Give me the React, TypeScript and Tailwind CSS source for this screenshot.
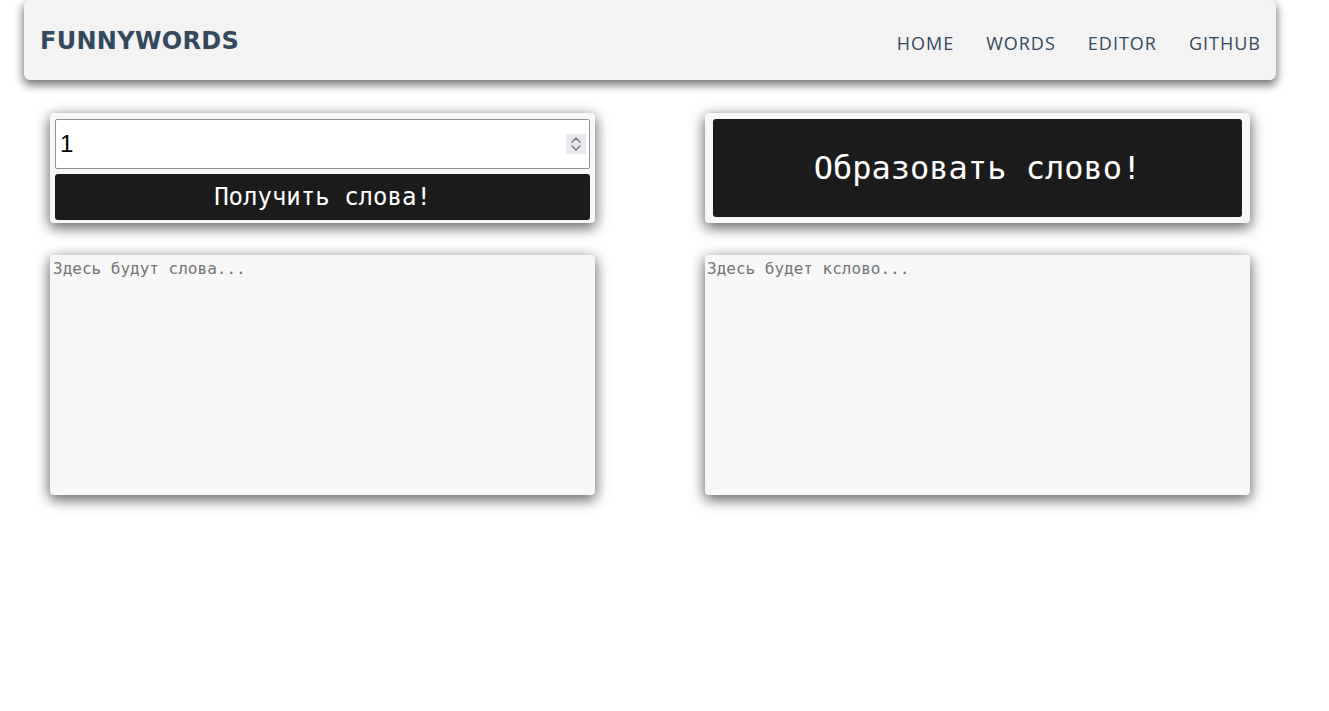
import React from "react";

const mono = { fontFamily: '"DejaVu Sans Mono", "Liberation Mono", monospace' };
const cardShadow = "shadow-[0_4px_14px_1px_rgba(0,0,0,0.6)]";

export default function App() {
  return (
    <div className="w-[1300px] min-h-[711px] bg-white" style={{ fontFamily: '"Open Sans", sans-serif' }}>
      <nav className="mx-[24px] h-[80px] bg-[#f3f3f3] rounded-[6px] shadow-[0_4px_10px_1px_rgba(0,0,0,0.55)] flex items-center justify-between pl-[16px] pr-[15px]">
        <div className="text-[24px] font-bold text-[#34495e] leading-none pt-[2px] tracking-[0.3px]" style={{ fontFamily: '"DejaVu Sans", sans-serif' }}>
          FUNNYWORDS
        </div>
        <ul className="flex items-center gap-[32px] text-[18px] tracking-[1px] text-[#34495e] pt-[6px]">
          <li>HOME</li>
          <li>WORDS</li>
          <li>EDITOR</li>
          <li>GITHUB</li>
        </ul>
      </nav>

      <div className="grid grid-cols-2 gap-x-[110px] gap-y-[32px] px-[50px] pt-[33px]">
        <div className="h-[110px] bg-[#f7f7f7] rounded-[4px] shadow-[0_4px_14px_1px_rgba(0,0,0,0.6)] pt-[6px] px-[5px] pb-[3px] flex flex-col gap-[5px]">
          <div className="relative h-[50px] bg-white border border-[#8f8f9d] rounded-[2px] flex items-center">
            <span className="pl-[4px] text-[24px] text-black" style={{ fontFamily: '"Liberation Sans", sans-serif' }}>1</span>
            <div className="absolute right-[3px] top-[14px] w-[20px] h-[20px] bg-[#e9e9ed] flex flex-col items-center justify-center">
              <svg width="12" height="18" viewBox="0 0 12 18" fill="none" stroke="#76767f" strokeWidth="1.5" strokeLinecap="round" strokeLinejoin="round">
                <path d="M2 7 L6 3 L10 7" />
                <path d="M2 11 L6 15 L10 11" />
              </svg>
            </div>
          </div>
          <button className="h-[46px] bg-[#1b1b1b] rounded-[3px] text-white text-[24px] leading-none" style={mono}>
            Получить слова!
          </button>
        </div>

        <div className={`h-[110px] bg-[#f7f7f7] rounded-[4px] ${cardShadow} pt-[6px] px-[8px] pb-[6px] flex`}>
          <button className="flex-1 h-[98px] bg-[#1b1b1b] rounded-[3px] text-white text-[32px] leading-none" style={mono}>
            Образовать слово!
          </button>
        </div>

        <div className="h-[240px] bg-[#f7f7f7] rounded-[4px] shadow-[0_4px_14px_1px_rgba(0,0,0,0.6)] px-[3px] pt-[4px]">
          <div className="text-[16px] text-[#757575] leading-[20px]" style={mono}>Здесь будут слова...</div>
        </div>

        <div className="h-[240px] bg-[#f7f7f7] rounded-[4px] shadow-[0_4px_14px_1px_rgba(0,0,0,0.6)] px-[2px] pt-[4px]">
          <div className="text-[16px] text-[#757575] leading-[20px]" style={mono}>Здесь будет кслово...</div>
        </div>
      </div>
    </div>
  );
}
